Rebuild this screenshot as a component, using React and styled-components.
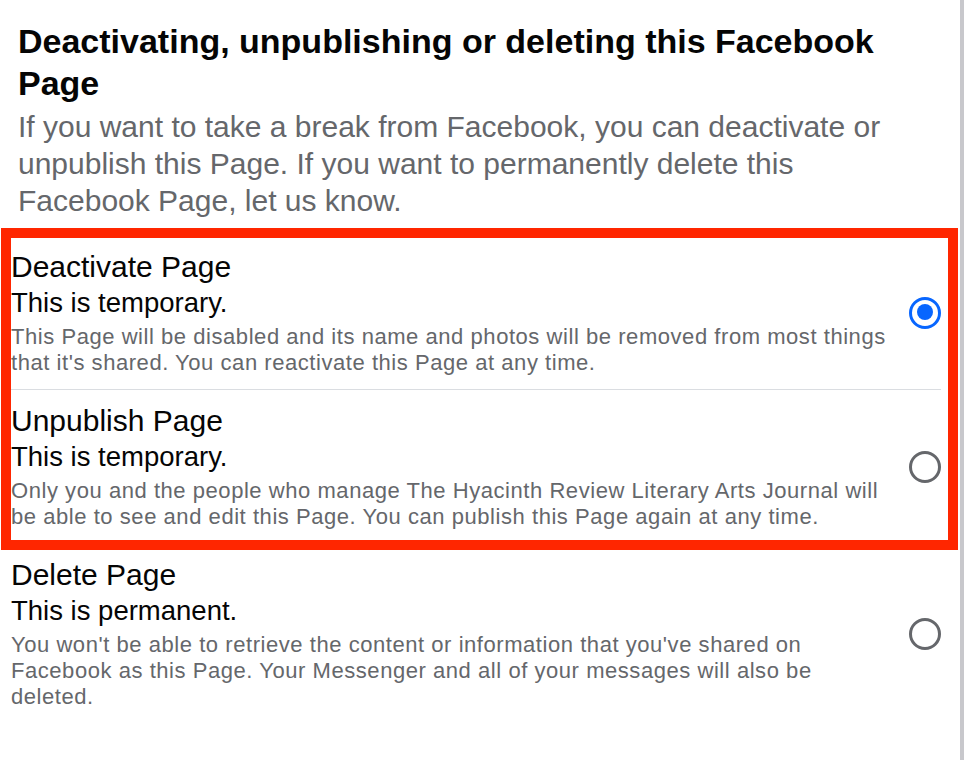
import React from 'react'
import styled, { createGlobalStyle } from 'styled-components'

const GlobalStyle = createGlobalStyle`
  body {
    margin: 0;
    background: #fff;
    font-family: "Liberation Sans", Arial, sans-serif;
  }
`

const Page = styled.div`
  width: 964px;
  min-height: 760px;
  box-sizing: border-box;
  padding-top: 20px;
  border-right: 4px solid #c8c8cc;
  background: #fff;
`

const Intro = styled.header`
  padding: 0 50px 0 18px;
`

const Heading = styled.h1`
  margin: 0;
  margin-right: -32px;
  font-size: 34px;
  line-height: 42px;
  font-weight: 700;
  color: #050505;
`

const Lead = styled.p`
  margin: 4px 0 0;
  font-size: 30px;
  line-height: 37px;
  color: #65676b;
`

const Highlight = styled.div`
  margin: 9px 2px 0 1px;
  border: 10px solid #ff2600;
`

const Option = styled.label`
  display: flex;
  align-items: center;
  gap: 8px;
  padding: ${p => p.$top}px 0 ${p => p.$bottom}px ${p => p.$inset}px;
  margin-right: ${p => p.$right}px;
  border-bottom: ${p => (p.$divider ? '1px solid #dadde1' : 'none')};
  cursor: pointer;
`

const Text = styled.div`
  flex: 1;
  min-width: 0;
`

const Title = styled.div`
  font-size: 30px;
  line-height: 36px;
  color: #050505;
`

const Note = styled.div`
  font-size: 27.5px;
  line-height: 36px;
  color: #050505;
`

const Desc = styled.div`
  margin-top: 3px;
  font-size: 22px;
  line-height: 26px;
  letter-spacing: 0.55px;
  color: #65676b;
`

const Radio = styled.span`
  position: relative;
  flex: none;
  width: 32px;
  height: 32px;
  box-sizing: border-box;
  border-radius: 50%;
  border: ${p => (p.$checked ? '3.5px solid #0866ff' : '3px solid #65676b')};

  &::after {
    content: '';
    display: ${p => (p.$checked ? 'block' : 'none')};
    position: absolute;
    top: 4.5px;
    left: 4.5px;
    width: 16px;
    height: 16px;
    border-radius: 50%;
    background: #0866ff;
  }
`

const options = [
  {
    id: 'deactivate',
    title: 'Deactivate Page',
    note: 'This is temporary.',
    desc: "This Page will be disabled and its name and photos will be removed from most things that it's shared. You can reactivate this Page at any time.",
  },
  {
    id: 'unpublish',
    title: 'Unpublish Page',
    note: 'This is temporary.',
    desc: 'Only you and the people who manage The Hyacinth Review Literary Arts Journal will be able to see and edit this Page. You can publish this Page again at any time.',
  },
  {
    id: 'delete',
    title: 'Delete Page',
    note: 'This is permanent.',
    desc: "You won't be able to retrieve the content or information that you've shared on Facebook as this Page. Your Messenger and all of your messages will also be deleted.",
  },
]

const OptionBody = ({ option, checked }) => (
  <>
    <Text>
      <Title>{option.title}</Title>
      <Note>{option.note}</Note>
      <Desc>{option.desc}</Desc>
    </Text>
    <Radio $checked={checked} />
  </>
)

export default function App() {
  const selected = 'deactivate'
  const [deactivate, unpublish, remove] = options

  return (
    <Page>
      <GlobalStyle />
      <Intro>
        <Heading>Deactivating, unpublishing or deleting this Facebook Page</Heading>
        <Lead>
          If you want to take a break from Facebook, you can deactivate or unpublish this
          Page. If you want to permanently delete this Facebook Page, let us know.
        </Lead>
      </Intro>

      <Highlight>
        <Option $top={11} $bottom={13} $inset={0} $right={7} $divider>
          <OptionBody option={deactivate} checked={selected === deactivate.id} />
        </Option>
        <Option $top={13} $bottom={10} $inset={0} $right={7}>
          <OptionBody option={unpublish} checked={selected === unpublish.id} />
        </Option>
      </Highlight>

      <Option $top={7} $bottom={12} $inset={11} $right={19}>
        <OptionBody option={remove} checked={selected === remove.id} />
      </Option>
    </Page>
  )
}
